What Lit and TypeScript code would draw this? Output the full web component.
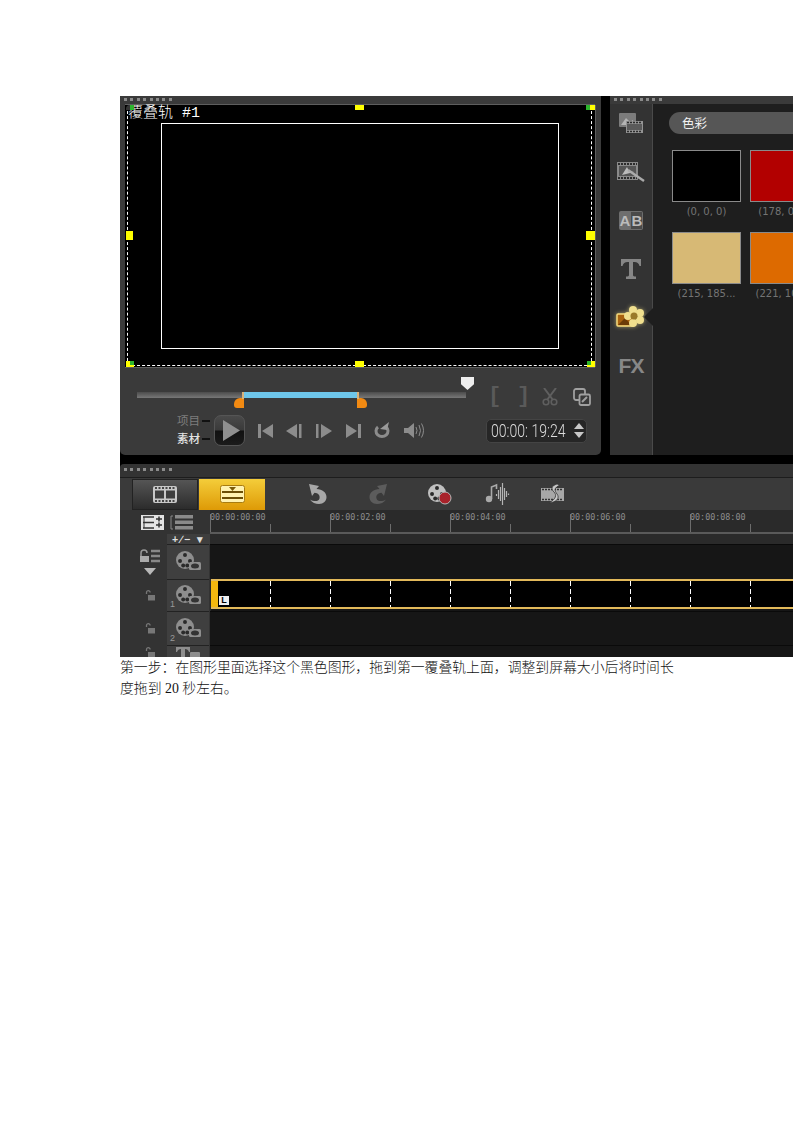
import { LitElement, html, css, svg } from "lit";
import { customElement } from "lit/decorators.js";

const reel = (x: number, y: number, r: number, fill = "#9a9a9a") => svg`
  <circle cx=${x} cy=${y} r=${r} fill=${fill}/>
  <circle cx=${x} cy=${y - r * 0.55} r=${r * 0.22} fill="#2a2a2a"/>
  <circle cx=${x - r * 0.55} cy=${y + r * 0.1} r=${r * 0.22} fill="#2a2a2a"/>
  <circle cx=${x + r * 0.55} cy=${y + r * 0.1} r=${r * 0.22} fill="#2a2a2a"/>
  <circle cx=${x - r * 0.2} cy=${y + r * 0.6} r=${r * 0.22} fill="#2a2a2a"/>
  <circle cx=${x + r * 0.25} cy=${y + r * 0.6} r=${r * 0.22} fill="#2a2a2a"/>`;

const icons = {
  media: html`<svg width="26" height="22" viewBox="0 0 26 22"><rect x="1" y="1" width="17" height="14" rx="1" fill="#7c7c7c"/><path d="M3 13l5-7 4 4 3-2v5H3z" fill="#b4b4b4"/><rect x="8" y="9" width="17" height="12" fill="#949494"/><path d="M9 10.500h15M9 19.500h15" stroke="#2c2c2c" stroke-width="1.600" stroke-dasharray="2 1"/><rect x="9" y="12" width="15" height="6" fill="#5a5a5a"/></svg>`,
  instant: html`<svg width="30" height="22" viewBox="0 0 30 22"><rect x="1" y="1" width="21" height="18" fill="#8a8a8a"/><path d="M2 3h19M2 17h19" stroke="#2c2c2c" stroke-width="2" stroke-dasharray="2 1"/><rect x="3" y="5" width="17" height="10" fill="#555"/><path d="M6 14l5-8 2 4 5 1z" fill="#bbb"/><path d="M12 9l16 11" stroke="#aaa" stroke-width="2.400"/></svg>`,
  ab: html`<svg width="26" height="22" viewBox="0 0 26 22"><rect x="1" y="2" width="24" height="19" rx="2" fill="#6e6e6e"/><rect x="13" y="3" width="11" height="17" fill="#4a4a4a"/><text x="7" y="17" class="ab" text-anchor="middle">A</text><text x="19" y="17" class="ab" text-anchor="middle">B</text></svg>`,
  title: html`<svg width="24" height="22" viewBox="0 0 24 22"><path d="M2 1h20v7h-1.500q-1-4-5-4H14v13q0 1.500 3 1.500V21H7v-2.500q3 0 3-1.500V4H8.500q-4 0-5 4H2z" fill="#868686"/></svg>`,
  graphic: html`<svg width="30" height="24" viewBox="0 0 30 24"><rect x="1" y="9" width="17" height="12" rx="1" fill="#a8620f" stroke="#f6dc7e" stroke-width="1.500"/><path d="M2 20l7-7 6 7z" fill="#6b3b07"/><g fill="#f0df8e"><circle cx="17" cy="5" r="4"/><circle cx="24" cy="8" r="4"/><circle cx="24" cy="15" r="4"/><circle cx="17" cy="18" r="4"/><circle cx="12" cy="11" r="4"/></g><circle cx="18" cy="11" r="3.500" fill="#9a7a2a"/></svg>`,
  fx: html`<svg width="32" height="20" viewBox="0 0 32 20"><text x="16" y="17" text-anchor="middle" class="fx">FX</text></svg>`,
  film: html`<svg width="26" height="19" viewBox="0 0 26 19"><rect x="1" y="1" width="24" height="17" rx="2" fill="#c8c8c8"/><path d="M3 3h20M3 16h20" stroke="#444" stroke-width="2" stroke-dasharray="2 1.500"/><rect x="3" y="5.500" width="9" height="8" fill="#3e3e3e"/><rect x="14" y="5.500" width="9" height="8" fill="#3e3e3e"/></svg>`,
  story: html`<svg width="25" height="18" viewBox="0 0 25 18"><rect x="0.500" y="0.500" width="24" height="17" rx="2" fill="#fff2b0" stroke="#a87c10"/><path d="M9 2h7l-3.500 4z" fill="#7a5a08"/><rect x="2" y="6" width="21" height="2" fill="#6b4e06"/><rect x="2" y="12" width="21" height="2" fill="#6b4e06"/></svg>`,
  undo: html`<svg width="22" height="22" viewBox="0 0 22 22"><path d="M2 1l10 2-2.500 3c6 .5 10 3.500 10 8 0 4-3 7-7.500 7-3.500 0-7-1.500-9-4.500 3.500 2 8.500 2.500 9.500-1 .8-3.500-1.500-5.500-5-5.800L5 13z" fill="#a8a8a8"/></svg>`,
  redo: html`<svg width="22" height="22" viewBox="0 0 22 22"><path d="M20 1L10 3l2.500 3C6.500 6.500 2.500 9.500 2.500 14c0 4 3 7 7.500 7 3.500 0 7-1.500 9-4.500-3.500 2-8.500 2.500-9.500-1-.8-3.500 1.500-5.500 5-5.800L17 13z" fill="#5c5c5c"/></svg>`,
  record: html`<svg width="26" height="22" viewBox="0 0 26 22">${reel(10, 10, 9, "#c0c0c0")}<circle cx="18" cy="15" r="6" fill="#a8222a" stroke="#b8b8b8"/></svg>`,
  audio: html`<svg width="26" height="24" viewBox="0 0 26 24"><circle cx="4" cy="17" r="3.200" fill="#aaa"/><path d="M6.500 17V5l5-2v4" stroke="#aaa" stroke-width="1.600" fill="none"/><path d="M11.500 12v2M13.500 8v9M15.500 5v14M17.500 1v22M19.500 6v12M21.500 9v6M23.500 11.500v1.500" stroke="#b4b4b4" stroke-width="1.200"/></svg>`,
  trans: html`<svg width="24" height="22" viewBox="0 0 24 22"><rect x="0" y="5" width="23" height="13" fill="#a8a8a8"/><path d="M1 6.500h21M1 16.500h21" stroke="#333" stroke-width="1.500" stroke-dasharray="2 1"/><path d="M16 1c-6 2-6 5-3 8s2 7-5 11c8-1 11-5 8-9s-3-6 3-9z" fill="#c8c8c8" stroke="#333" stroke-width=".8"/></svg>`,
  listOn: html`<svg width="23" height="15" viewBox="0 0 23 15"><rect width="23" height="15" fill="#e4e4e4"/><path d="M2 2h11M2 7.500h11M2 13h11" stroke="#333" stroke-width="1.500"/><path d="M3 2v11" stroke="#333"/><path d="M15 4h6M18 1.500v5M15 10h6M18 7.500v5" stroke="#333" stroke-width="1.500"/></svg>`,
  listOff: html`<svg width="24" height="15" viewBox="0 0 24 15"><path d="M1 1h2M1 1v13M1 14h2" stroke="#8a8a8a" fill="none"/><rect x="5" y="0" width="18" height="3.500" fill="#8a8a8a"/><rect x="5" y="5.500" width="18" height="3.500" fill="#8a8a8a"/><rect x="5" y="11" width="18" height="3.500" fill="#8a8a8a"/></svg>`,
  lock: html`<svg width="10" height="11" viewBox="0 0 10 11"><path d="M1.500 4V2.500a1.800 1.800 0 0 1 3.600 0" stroke="#777" stroke-width="1.300" fill="none"/><rect x="3" y="5" width="7" height="5.500" fill="#777"/></svg>`,
  lockAll: html`<svg width="22" height="14" viewBox="0 0 22 14"><path d="M2 7V4a3 3 0 0 1 6 0" stroke="#999" stroke-width="1.500" fill="none"/><rect x="1" y="7" width="9" height="6" fill="#aaa"/><path d="M12 2h9M12 7h9M12 12h9" stroke="#888" stroke-width="2.500"/></svg>`,
  down: html`<svg width="12" height="7" viewBox="0 0 12 7"><path d="M0 0h12L6 7z" fill="#b8b8b8"/></svg>`,
  start: html`<svg width="16" height="14" viewBox="0 0 16 14"><rect x="0" y="0" width="3" height="14" fill="#8c8c8c"/><path d="M15 0v14L4 7z" fill="#8c8c8c"/></svg>`,
  prev: html`<svg width="18" height="14" viewBox="0 0 18 14"><path d="M11 0v14L0 7z" fill="#8c8c8c"/><rect x="13" width="2.500" height="14" fill="#8c8c8c"/></svg>`,
  next: html`<svg width="18" height="14" viewBox="0 0 18 14"><rect x="1" width="2.500" height="14" fill="#8c8c8c"/><path d="M6 0v14l11-7z" fill="#8c8c8c"/></svg>`,
  end: html`<svg width="16" height="14" viewBox="0 0 16 14"><path d="M1 0v14l11-7z" fill="#8c8c8c"/><rect x="13" width="3" height="14" fill="#8c8c8c"/></svg>`,
  repeat: html`<svg width="20" height="17" viewBox="0 0 20 17"><path d="M6 5a6 5.500 0 1 0 8 0" stroke="#8c8c8c" stroke-width="3" fill="none"/><path d="M8 7l9-7-2 8z" fill="#9a9a9a"/></svg>`,
  volume: html`<svg width="20" height="17" viewBox="0 0 20 17"><path d="M0 6h4l6-5v15l-6-5H0z" fill="#8c8c8c"/><path d="M12 5q2 3.500 0 7M15 3q3 5.500 0 11M17.500 1.500q4 7 0 14" stroke="#8c8c8c" fill="none"/></svg>`,
  scissors: html`<svg width="16" height="18" viewBox="0 0 16 18"><path d="M2 0l9 12M14 0L5 12" stroke="#5f5f5f" stroke-width="2"/><circle cx="4" cy="14" r="2.800" stroke="#5f5f5f" stroke-width="1.600" fill="none"/><circle cx="12" cy="14" r="2.800" stroke="#5f5f5f" stroke-width="1.600" fill="none"/></svg>`,
  copy: html`<svg width="18" height="18" viewBox="0 0 18 18"><rect x="1" y="1" width="11" height="11" rx="2" fill="none" stroke="#a0a0a0" stroke-width="1.800"/><rect x="6.500" y="6.500" width="10.500" height="10.500" rx="1.500" fill="#3a3a3a" stroke="#a0a0a0" stroke-width="1.800"/><path d="M9 14l5-5" stroke="#a0a0a0" stroke-width="2"/></svg>`,
  playGlyph: html`<svg width="17" height="21" viewBox="0 0 17 21"><path d="M0 0v21l17-10.500z" fill="#8f8f8f"/></svg>`,
  trackVideo: html`<svg width="28" height="24" viewBox="0 0 28 24">${reel(11, 10, 9, "#8e8e8e")}<rect x="15" y="12" width="12" height="8" rx="1.500" fill="#8e8e8e"/><ellipse cx="21" cy="16" rx="4" ry="2.500" fill="#333"/></svg>`,
  trackTitle: html`<svg width="28" height="14" viewBox="0 0 28 14"><path d="M2 1h14v5h-1q-1-3-4-3v11H7V3Q4 3 3 6H2z" fill="#8e8e8e"/><rect x="16" y="6" width="10" height="7" rx="1" fill="#8e8e8e"/></svg>`,
};

const swatches = [
  { c: "#000000", l: "(0, 0, 0)" },
  { c: "#b20000", l: "(178, 0, 0)" },
  { c: "#d7b975", l: "(215, 185..." },
  { c: "#dd6a00", l: "(221, 106..." },
];

@customElement("app-root")
export class AppRoot extends LitElement {
  static styles = css`
    :host {
      display: block;
      width: 793px;
      height: 1122px;
      overflow: hidden;
      background: #fff;
      padding: 96px 0 0 120px;
      box-sizing: border-box;
      font-family: "Noto Sans CJK SC", sans-serif;
    }
    .shot { width: 673px; height: 561px; background: #000; display: flex; flex-direction: column; gap: 9px; overflow: hidden; }
    .top { display: flex; gap: 9px; height: 359px; flex: none; }
    .grip { display: flex; gap: 3.400px; padding: 2px 0 0 4px; height: 7px; box-sizing: border-box; flex: none; }
    .grip i { width: 3px; height: 3px; background: #8b8b8b; }

    .player { width: 481px; flex: none; background: #3a3a3a; border-radius: 0 0 5px 5px; display: flex; flex-direction: column; }
    .player .grip { height: 9px; }
    .preview { position: relative; margin: 0 6px 0 5px; height: 262px; background: #000; box-shadow: 0 -1px 0 #5e5e5e, 1px 0 0 #5e5e5e, 0 1px 0 #5e5e5e; }
    .dash { position: absolute; left: 2px; top: 1px; right: 3px; bottom: 1px; border: 1px dashed #fff; border-top: none; }
    .safe { position: absolute; left: 36px; top: 18px; width: 396px; height: 224px; border: 1px solid #fff; }
    .cap { position: absolute; left: 3px; top: 1px; color: #fff; font: 300 15px/16px "Liberation Mono", "Noto Sans CJK SC", monospace; background: #000; white-space: pre; }
    .h { position: absolute; background: #ff0; }
    .h.tc { left: 230px; top: 0; width: 9px; height: 5px; }
    .h.bc { left: 230px; bottom: 0; width: 9px; height: 6px; }
    .h.lc { left: 1px; top: 126px; width: 7px; height: 9px; }
    .h.rc { right: 0; top: 126px; width: 9px; height: 9px; }
    .h.c { width: 5px; height: 5px; }
    .h.c b { position: absolute; width: 4px; height: 5px; background: #2db52d; }
    .h.tl { left: 1px; top: 0; } .h.tl b { left: 4px; top: 0; }
    .h.tr { right: 0; top: 0; } .h.tr b { left: -4px; top: 0; }
    .h.bl { left: 1px; bottom: 0; width: 8px; height: 6px; } .h.bl b { right: 0; top: 0; height: 4px; }
    .h.br { right: 0; bottom: 0; width: 8px; height: 6px; } .h.br b { left: 0; top: 0; height: 4px; }

    .scrub { display: flex; height: 30px; margin-top: 10px; flex: none; }
    .track { position: relative; margin: 15px 0 0 17px; width: 329px; height: 6px; background: linear-gradient(#4c4c4c, #777); flex: none; }
    .range { position: absolute; left: 107px; width: 113px; top: 0; height: 6px; background: #6ec6ea; }
    .mark { position: absolute; top: 6px; width: 10px; height: 10px; background: #f28a12; }
    .mark::after { content: ""; position: absolute; top: -6px; width: 2px; height: 7px; background: #d9b27a; }
    .mark.a { left: 97px; border-radius: 6px 0 0 3px; }
    .mark.a::after { right: 0; }
    .mark.b { left: 220px; border-radius: 0 6px 3px 0; }
    .mark.b::after { left: 0; }
    .thumb { position: absolute; right: -8px; top: -15px; width: 13px; height: 13px; background: #eee; clip-path: polygon(0 0, 100% 0, 100% 55%, 50% 100%, 0 55%); }
    .edit { display: flex; align-items: center; margin-left: 25px; color: #5a5a5a; font: bold 22px/1 "Liberation Mono", monospace; height: 20px; margin-top: 10px; }
    .edit span:nth-child(1) { width: 29px; margin-left: -3px; }
    .edit span:nth-child(2) { width: 25px; }
    .edit svg { display: block; }
    .edit span:nth-child(3) { width: 31px; }

    .transport { display: flex; align-items: center; height: 31px; margin-top: 8px; padding-left: 57px; flex: none; }
    .mode { display: flex; flex-direction: column; gap: 3px; font-size: 11.500px; line-height: 15px; color: #7d7d7d; width: 37px; margin-top: -2px; }
    .mode div { display: flex; align-items: center; gap: 2px; }
    .mode div::after { content: ""; width: 8px; height: 2px; background: #111; }
    .mode .on { color: #e4e4e4; font-weight: 500; }
    .play { width: 31px; height: 31px; flex: none; box-sizing: border-box; border-radius: 7px; border: 1px solid #555; background: linear-gradient(#4a4a4a 0, #3a3a3a 48%, #111 52%, #1b1b1b 100%); display: flex; align-items: center; justify-content: center; padding-left: 3px; margin-right: 13px; }
    .btns { display: flex; align-items: center; gap: 11.500px; width: 228px; flex: none; }
    .btns svg { display: block; }
    .time { width: 101px; height: 24px; flex: none; box-sizing: border-box; border-radius: 5px; background: #262626; border: 1px solid #444; display: flex; align-items: center; justify-content: space-between; padding: 0 2px 0 4px; color: #ddd; font: 300 18px/1 "Roboto", sans-serif; white-space: pre; overflow: hidden; }
    .digits { display: block; width: 80px; transform: scaleX(0.78); transform-origin: left center; }
    .spin { display: flex; flex-direction: column; gap: 3px; }
    .spin i { display: block; width: 0; height: 0; border-left: 5.500px solid transparent; border-right: 5.500px solid transparent; }
    .spin i:first-child { border-bottom: 6px solid #c8c8c8; }
    .spin i:last-child { border-top: 6px solid #c8c8c8; }

    .lib { flex: 1; background: #3a3a3a; border-radius: 0 0 0 5px; display: flex; flex-direction: column; min-width: 0; }
    .lib .grip { height: 8px; }
    .lib-body { flex: 1; display: flex; min-height: 0; }
    .tabs { width: 43px; flex: none; display: flex; flex-direction: column; align-items: center; background: #333; border-right: 1px solid #4a4a4a; box-sizing: border-box; }
    .tab { height: 48.500px; display: flex; align-items: center; justify-content: center; width: 100%; position: relative; flex: none; }
    .tab:first-child { margin-top: -5px; }
    .tab svg { display: block; }
    .tab.on svg { filter: drop-shadow(0 0 2px #f0e08a99); }
    .tab.on::after { content: ""; position: absolute; right: -1px; top: 15px; border-top: 9px solid transparent; border-bottom: 9px solid transparent; border-right: 9px solid #1e1e1e; }
    .ab { font: bold 15px "Liberation Sans", sans-serif; fill: #bbb; }
    .fx { font: bold 21px "Liberation Sans", sans-serif; fill: #878787; letter-spacing: -1px; }
    .content { flex: 1; background: #1e1e1e; padding: 8px 0 0 16px; min-width: 0; overflow: hidden; }
    .pill { height: 22px; width: 140px; border-radius: 11px 0 0 11px; background: #565656; color: #f0f0f0; font-size: 12.500px; line-height: 22px; padding-left: 13px; box-sizing: border-box; }
    .grid { display: grid; grid-template-columns: 78px 78px; gap: 0; margin: 16px 0 0 3px; width: 160px; }
    .sw { height: 82px; }
    .sw div { width: 69px; height: 52px; box-sizing: border-box; border: 1px solid #8a8a8a; }
    .sw span { display: block; width: 69px; margin-top: 3px; text-align: center; white-space: nowrap; color: #747474; font: 10px/13px "DejaVu Sans", sans-serif; }

    .tl { flex: 1; background: #333; display: flex; flex-direction: column; min-height: 0; border-radius: 4px 0 0 0; }
    .tl .grip { height: 13px; padding-top: 4px; }
    .bar { height: 33px; flex: none; background: #3a3a3a; border-top: 1px solid #1d1d1d; box-sizing: border-box; display: flex; align-items: center; padding-left: 12px; }
    .mbtn { width: 66px; height: 31px; display: flex; align-items: center; justify-content: center; flex: none; }
    .mbtn.a { background: linear-gradient(#555, #2c2c2c); border: 1px solid #222; box-sizing: border-box; }
    .mbtn.b { background: linear-gradient(#f4cd3a, #de9a06); margin-left: 1px; }
    .tools { display: flex; align-items: center; margin-left: 42px; }
    .tools svg { display: block; }
    .tools svg:nth-child(2), .tools svg:nth-child(3) { margin-left: 38px; }
    .tools svg:nth-child(4) { margin-left: 32px; }
    .tools svg:nth-child(5) { margin-left: 30px; }
    .rows { flex: 1; display: grid; grid-template-columns: 90px 1fr; grid-template-rows: 24px 10px 35px 32px 34px 1fr; background: #2a2a2a; min-height: 0; }
    .viewbtns { display: flex; align-items: center; gap: 6px; padding: 0 0 0 21px; background: #333; }
    .viewbtns svg { display: block; }
    .ruler { display: flex; background: #2a2a2a; border-bottom: 2px solid #5a5a5a; box-sizing: border-box; overflow: hidden; }
    .tick { width: 60px; flex: none; height: 100%; box-sizing: border-box; position: relative; }
    .tick::before { content: ""; position: absolute; left: 0; bottom: 0; width: 1px; height: 8px; background: #6c6c6c; }
    .tick.major::before { height: 18px; }
    .tick span { position: absolute; left: 0; top: 1px; color: #8e8e8e; font: 8.400px/12px "DejaVu Sans Mono", monospace; white-space: nowrap; }
    .pm { display: flex; background: #333; }
    .pm b { margin-left: 47px; flex: 1; background: #3e3e3e; color: #ddd; font: bold 10.500px/10px "Liberation Sans", sans-serif; text-align: center; letter-spacing: 2px; white-space: pre; overflow: hidden; }
    .gap { background: #2a2a2a; }
    .head { background: #333; display: flex; }
    .lk { width: 47px; flex: none; display: flex; flex-direction: column; align-items: center; justify-content: center; gap: 5px; padding-left: 12px; box-sizing: border-box; }
    .lk svg { display: block; }
    .tk { flex: 1; background: #3f3f3f; border-top: 1px solid #222; margin-right: 1px; display: flex; align-items: center; justify-content: center; position: relative; color: #999; font: 9px/1 "Liberation Sans", sans-serif; overflow: hidden; }
    .tk svg { display: block; }
    .tk em { position: absolute; left: 3px; bottom: 2px; font-style: normal; }
    .lane { background: #161616; border-top: 1px solid #0a0a0a; }
    .lane.sel { background: #161616; border: none; display: flex; flex-direction: column; position: relative; margin-left: 1px; }
    .clip { height: 30px; flex: none; box-sizing: border-box; display: flex; background: #000; border-top: 2px solid #e2b95a; border-bottom: 2px solid #e2b95a; }
    .clip-edge { width: 7px; background: #f5b80f; flex: none; }
    .cell { width: 60px; flex: none; box-sizing: border-box; background: repeating-linear-gradient(#fff 0 5px, transparent 5px 8px) right top / 1px 100% no-repeat; }
    .cell.first { width: 53px; }
    .tag { position: absolute; left: 8px; top: 17px; width: 10px; height: 9px; background: #eee; color: #000; font: bold 9px/9px "Liberation Sans", sans-serif; text-align: center; }

    .caption { margin: 0; width: 560px; color: #111; font: 300 13.850px/21px "Liberation Serif", "Noto Sans CJK SC", serif; }
  `;

  private grip() {
    return html`<div class="grip">${Array.from({ length: 8 }, () => html`<i></i>`)}</div>`;
  }

  render() {
    const times = ["00:00:00:00", "00:00:02:00", "00:00:04:00", "00:00:06:00", "00:00:08:00", "00:00:10:00"];
    return html`
      <div class="shot">
        <div class="top">
          <section class="player">
            ${this.grip()}
            <div class="preview">
              <div class="dash"></div>
              <div class="safe"></div>
              <div class="cap">覆叠轨 #1</div>
              <i class="h tc"></i><i class="h bc"></i><i class="h lc"></i><i class="h rc"></i>
              <i class="h c tl"><b></b></i><i class="h c tr"><b></b></i><i class="h c bl"><b></b></i><i class="h c br"><b></b></i>
            </div>
            <div class="scrub">
              <div class="track">
                <div class="range"></div>
                <i class="mark a"></i><i class="mark b"></i><i class="thumb"></i>
              </div>
              <div class="edit"><span>[</span><span>]</span><span>${icons.scissors}</span>${icons.copy}</div>
            </div>
            <div class="transport">
              <div class="mode"><div>项目</div><div class="on">素材</div></div>
              <div class="play">${icons.playGlyph}</div>
              <div class="btns">${icons.start}${icons.prev}${icons.next}${icons.end}${icons.repeat}${icons.volume}</div>
              <div class="time"><span class="digits">00:00: 19:24</span><span class="spin"><i></i><i></i></span></div>
            </div>
          </section>
          <section class="lib">
            ${this.grip()}
            <div class="lib-body">
              <div class="tabs">
                <div class="tab">${icons.media}</div>
                <div class="tab">${icons.instant}</div>
                <div class="tab">${icons.ab}</div>
                <div class="tab">${icons.title}</div>
                <div class="tab on">${icons.graphic}</div>
                <div class="tab">${icons.fx}</div>
              </div>
              <div class="content">
                <div class="pill">色彩</div>
                <div class="grid">
                  ${swatches.map(
                    (s) => html`<div class="sw"><div style="background:${s.c}"></div><span>${s.l}</span></div>`
                  )}
                </div>
              </div>
            </div>
          </section>
        </div>
        <section class="tl">
          ${this.grip()}
          <div class="bar">
            <div class="mbtn a">${icons.film}</div>
            <div class="mbtn b">${icons.story}</div>
            <div class="tools">${icons.undo}${icons.redo}${icons.record}${icons.audio}${icons.trans}</div>
          </div>
          <div class="rows">
            <div class="viewbtns">${icons.listOn}${icons.listOff}</div>
            <div class="ruler">
              ${Array.from({ length: 10 }, (_, i) =>
                i % 2 === 0
                  ? html`<div class="tick major"><span>${times[i / 2]}</span></div>`
                  : html`<div class="tick"></div>`
              )}
            </div>
            <div class="pm"><b>+∕− ▾</b></div>
            <div class="gap"></div>

            <div class="head">
              <div class="lk">${icons.lockAll}${icons.down}</div>
              <div class="tk">${icons.trackVideo}</div>
            </div>
            <div class="lane"></div>

            <div class="head">
              <div class="lk">${icons.lock}</div>
              <div class="tk">${icons.trackVideo}<em>1</em></div>
            </div>
            <div class="lane sel">
              <div class="clip">
                <div class="clip-edge"></div>
                <div class="cell first"></div>
                ${Array.from({ length: 10 }, () => html`<div class="cell"></div>`)}
              </div>
              <div class="tag">L</div>
            </div>

            <div class="head">
              <div class="lk">${icons.lock}</div>
              <div class="tk">${icons.trackVideo}<em>2</em></div>
            </div>
            <div class="lane"></div>

            <div class="head">
              <div class="lk">${icons.lock}</div>
              <div class="tk">${icons.trackTitle}</div>
            </div>
            <div class="lane"></div>
          </div>
        </section>
      </div>
      <p class="caption">第一步：在图形里面选择这个黑色图形，拖到第一覆叠轨上面，调整到屏幕大小后将时间长度拖到 20 秒左右。</p>
    `;
  }
}
